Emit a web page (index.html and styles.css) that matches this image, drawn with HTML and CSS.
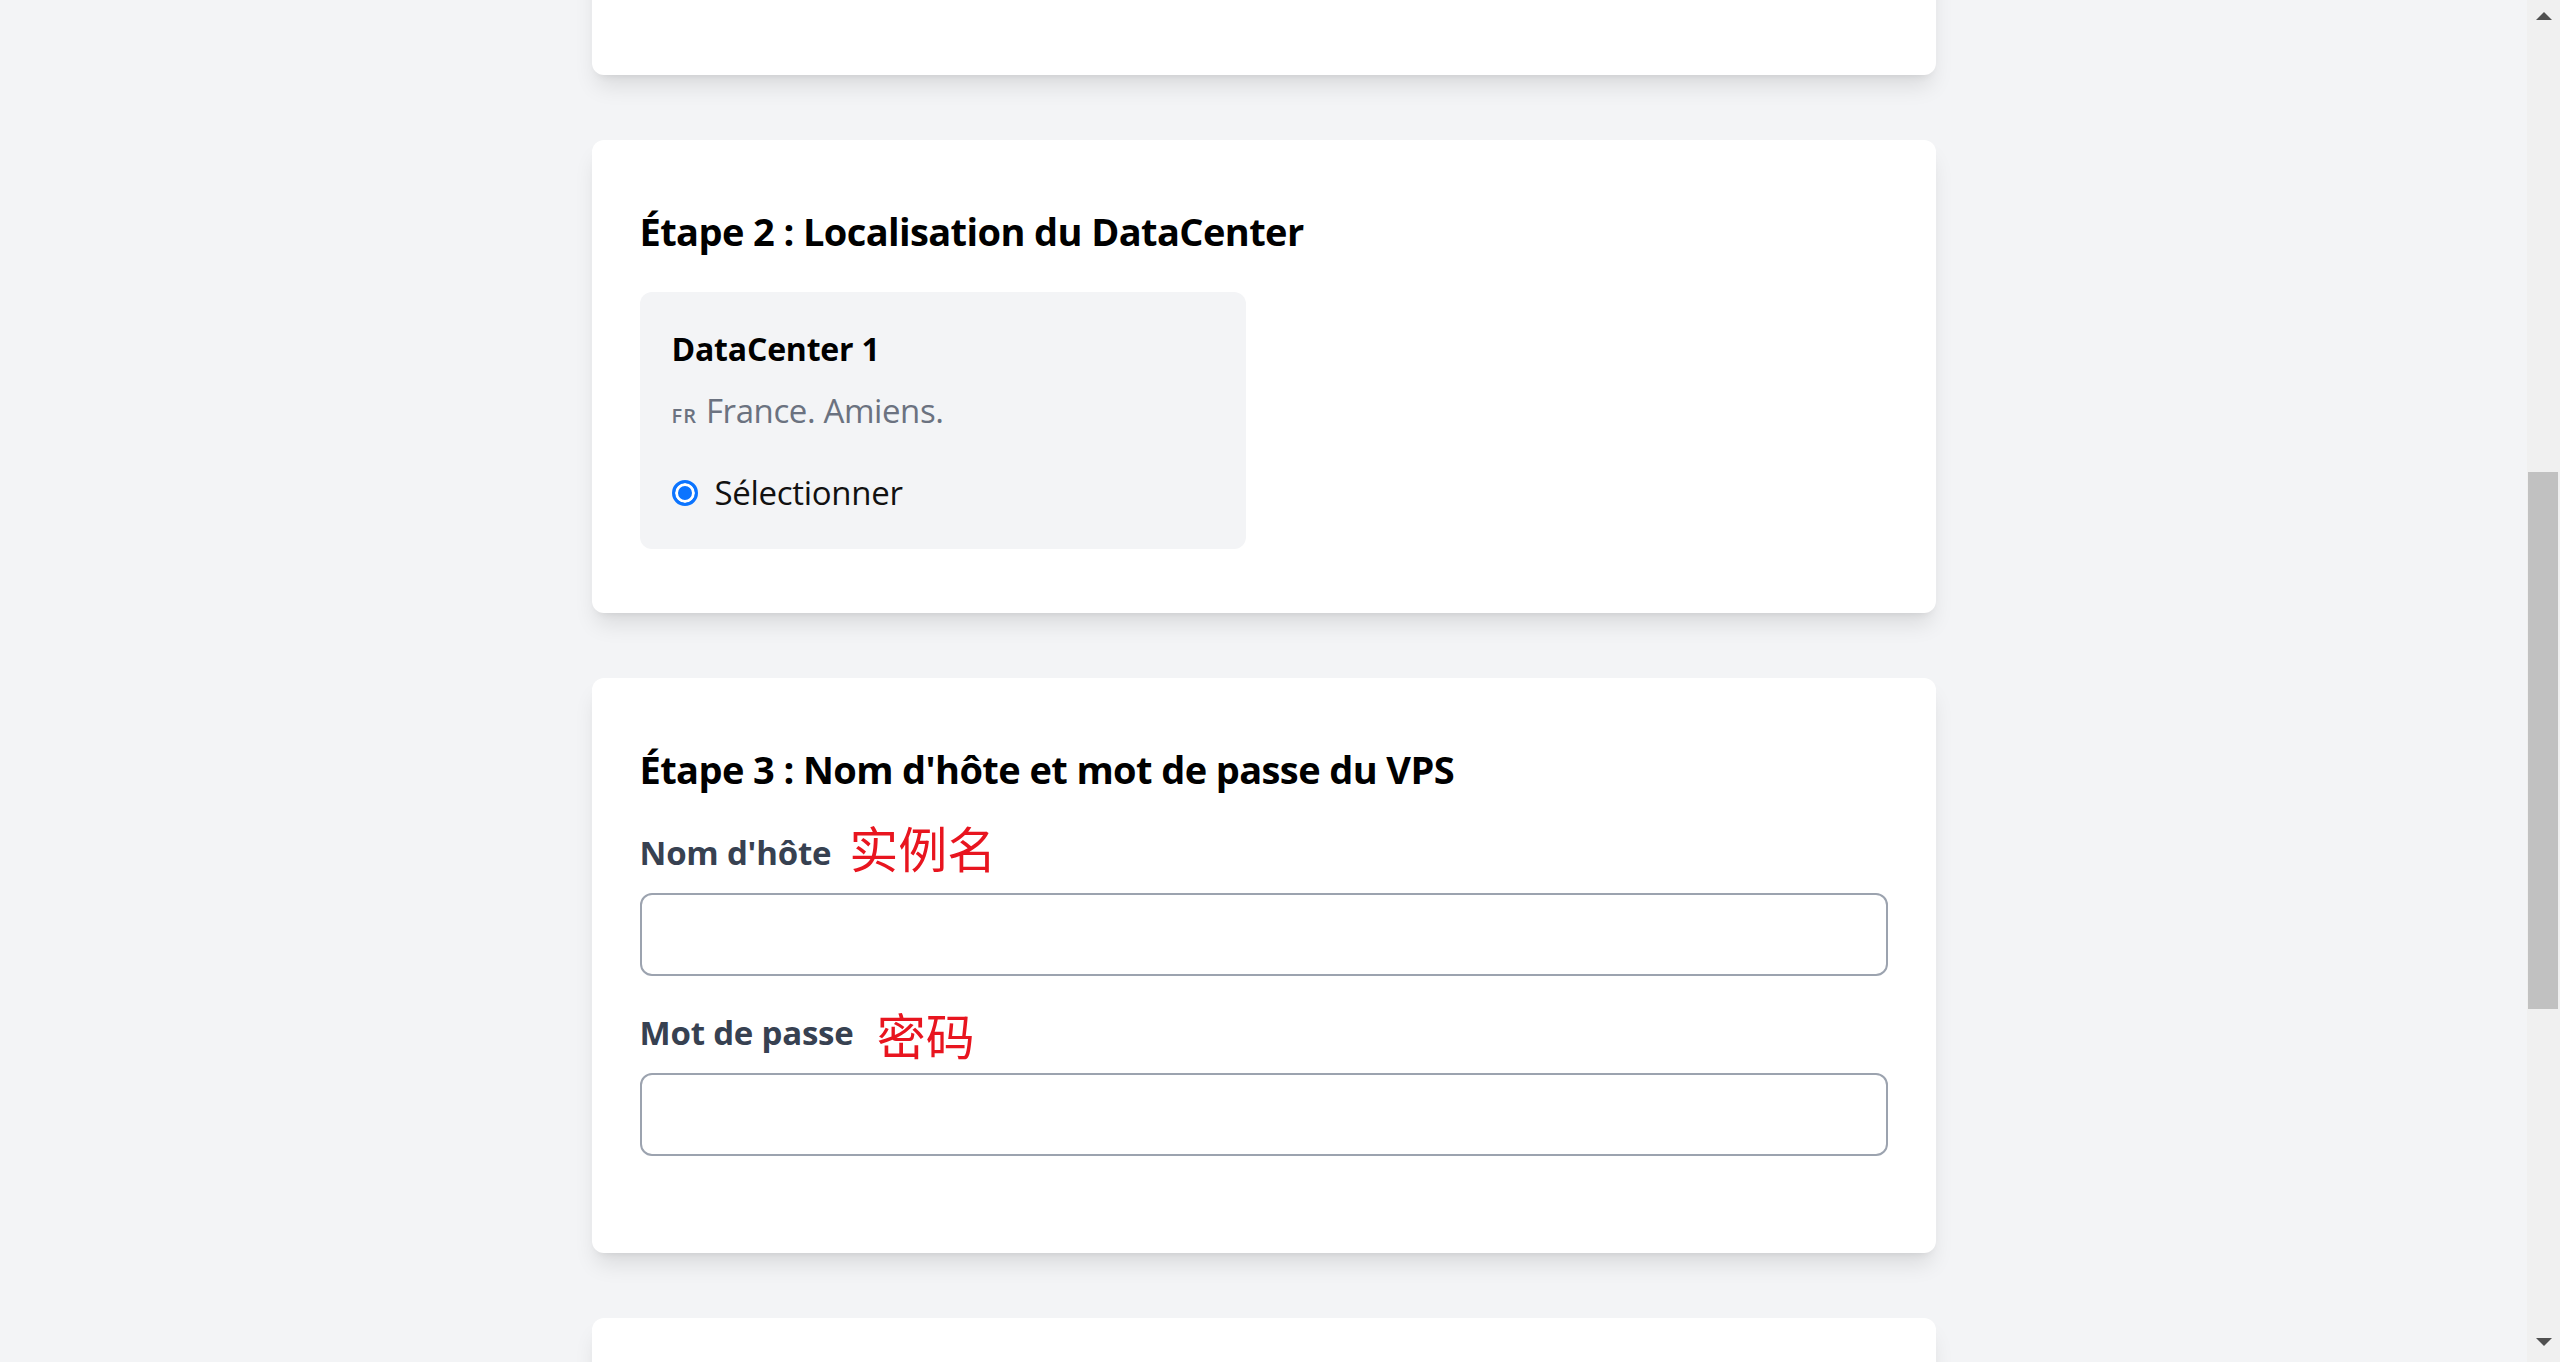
FILE: index.html
```html
<!DOCTYPE html>
<html lang="fr">
<head>
<meta charset="utf-8">
<title>Commander un VPS</title>
<link rel="stylesheet" href="styles.css">
</head>
<body>
<div class="viewport">
  <div class="stack">
    <section class="card card-prev"></section>

    <section class="card card-step2">
      <h2 class="step-title">Étape 2 : Localisation du DataCenter</h2>
      <div class="dc-grid">
        <label class="dc-box">
          <span class="dc-name">DataCenter 1</span>
          <span class="dc-loc"><span class="flag">FR</span>France. Amiens.</span>
          <span class="dc-select"><input class="radio" type="radio" name="dc" checked><span>Sélectionner</span></span>
        </label>
      </div>
    </section>

    <section class="card card-step3">
      <h2 class="step-title">Étape 3 : Nom d'hôte et mot de passe du VPS</h2>
      <div class="field">
        <label class="field-label" for="hostname">Nom d'hôte<span class="anno">实例名</span></label>
        <input class="text-input" id="hostname" type="text">
      </div>
      <div class="field">
        <label class="field-label" for="password">Mot de passe<span class="anno anno-pw">密码</span></label>
        <input class="text-input" id="password" type="password">
      </div>
    </section>

    <section class="card card-next"></section>
  </div>
</div>
<div class="scrollbar">
  <div class="sb-btn sb-up"><svg width="16" height="8" viewBox="0 0 16 8"><polygon points="8,0 16,8 0,8" fill="#505050"/></svg></div>
  <div class="sb-thumb"></div>
  <div class="sb-fill"></div>
  <div class="sb-btn sb-down"><svg width="16" height="8" viewBox="0 0 16 8"><polygon points="0,0 16,0 8,8" fill="#505050"/></svg></div>
</div>
</body>
</html>
```
FILE: styles.css
```css
* { box-sizing: border-box; }
html, body { margin: 0; padding: 0; height: 100%; }
body {
  display: flex;
  overflow: hidden;
  background: #f3f4f6;
  font-family: "Open Sans", "Noto Sans", "Liberation Sans", sans-serif;
  color: #000;
}
.viewport {
  flex: 1;
  overflow: hidden;
}
.stack {
  width: 1344px;
  margin: -225px auto 0;
  display: flex;
  flex-direction: column;
  gap: 65px;
}
.card {
  background: #fff;
  border-radius: 12px;
  box-shadow: 0 15px 22px -4px rgba(0,0,0,0.1), 0 6px 9px -6px rgba(0,0,0,0.1);
  padding: 67px 48px 0;
  flex-shrink: 0;
}
.card-prev { height: 300px; }
.card-step2 { height: 473px; }
.card-step3 { height: 575px; }
.card-next { height: 400px; }

.step-title {
  margin: 0;
  font-size: 38px;
  line-height: 48px;
  font-weight: 700;
  letter-spacing: -0.6px;
  color: #000;
}
.dc-grid {
  margin-top: 37px;
  display: grid;
  grid-template-columns: 1fr 1fr;
  gap: 36px;
}
.dc-box {
  background: #f3f4f6;
  border-radius: 12px;
  height: 257px;
  padding: 36px 32px 34px;
  display: flex;
  flex-direction: column;
}
.dc-name {
  font-size: 32px;
  line-height: 42px;
  font-weight: 700;
  letter-spacing: -0.2px;
}
.dc-loc {
  margin-top: 17px;
  font-size: 33px;
  line-height: 48px;
  color: #6b7280;
  letter-spacing: -0.4px;
}
.flag {
  font-size: 20px;
  font-weight: 600;
  letter-spacing: 1px;
  margin-right: 9px;
  color: #6b7280;
}
.dc-select {
  margin-top: 29px;
  font-size: 33px;
  line-height: 48px;
  display: flex;
  align-items: center;
  gap: 17px;
  color: #111;
  letter-spacing: -0.3px;
}
.radio {
  appearance: none;
  -webkit-appearance: none;
  margin: 0;
  width: 26px;
  height: 26px;
  border-radius: 50%;
  border: 3px solid #0b74ff;
  background: #0b74ff;
  box-shadow: inset 0 0 0 3px #fff;
  flex-shrink: 0;
}

.field:first-of-type { margin-top: 32px; }
.field + .field { margin-top: 29px; }
.field-label {
  display: block;
  height: 56px;
  line-height: 56px;
  font-size: 33px;
  font-weight: 700;
  color: #374151;
  letter-spacing: -0.2px;
  white-space: nowrap;
}
.anno {
  font-family: "Noto Sans CJK SC", "Noto Sans CJK JP", sans-serif;
  font-weight: 400;
  font-size: 49px;
  line-height: 0;
  color: #e8151f;
  margin-left: 18px;
  letter-spacing: 0;
  vertical-align: -3px;
}
.anno-pw {
  margin-left: 23px;
  vertical-align: -10px;
}
.text-input {
  display: block;
  width: 100%;
  height: 83px;
  margin-top: 12px;
  border: 2px solid #9ca3af;
  border-radius: 12px;
  background: #fff;
  font: inherit;
  font-size: 30px;
  padding: 0 20px;
  outline: none;
}

.scrollbar {
  width: 33px;
  flex-shrink: 0;
  background: #f0f0f0;
  display: flex;
  flex-direction: column;
}
.sb-btn {
  display: flex;
  align-items: center;
  justify-content: center;
  flex-shrink: 0;
}
.sb-up { height: 32px; }
.sb-down { height: 40px; }
.sb-thumb {
  margin: 440px 2px 0 1px;
  height: 537px;
  background: #c1c1c1;
  flex-shrink: 0;
}
.sb-fill { flex: 1; }
```
